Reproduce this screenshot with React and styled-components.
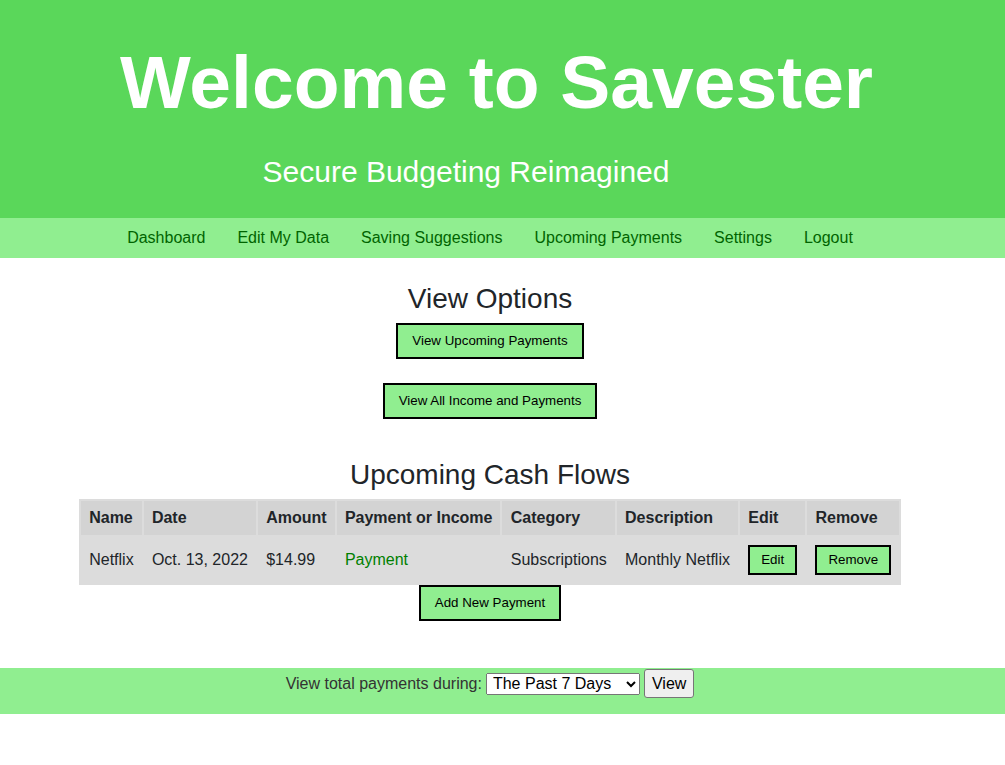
import React from "react";
import styled, { createGlobalStyle } from "styled-components";

const GlobalStyle = createGlobalStyle`
    body {
        margin: 0;
        font-family: "Liberation Sans", Arial, sans-serif;
        color: #212529;
        background: #fff;
    }
`;

const Header = styled.header`
    background: #5ad75a;
    padding: 39px 12px 29px 0;
    text-align: center;
    color: #fff;
`;

const Title = styled.h1`
    margin: 0;
    font-size: 75px;
    font-weight: bold;
`;

const Subtitle = styled.h2`
    margin: 30px 61px 0 0;
    font-size: 30px;
    font-weight: normal;
`;

const Nav = styled.nav`
    background: #90ee90;
    height: 40px;
    display: flex;
    justify-content: center;
    align-items: center;
    padding-right: 25px;
`;

const NavLink = styled.a`
    color: #006400;
    font-size: 16px;
    padding: 0 16px;
    text-decoration: none;
    cursor: pointer;
`;

const Main = styled.main`
    display: flex;
    flex-direction: column;
    align-items: center;
    padding-right: 25px;
`;

const Heading = styled.h2`
    font-size: 28px;
    font-weight: normal;
    margin: ${(p) => p.$top}px 0 8px;
`;

const GreenButton = styled.button`
    background: #90ee90;
    border: 2px solid #000;
    font-family: "Liberation Sans", Arial, sans-serif;
    font-size: 13.33px;
    line-height: 16px;
    color: #000;
    padding: ${(p) => (p.$small ? "5px 11px" : "8px 14px")};
    margin-top: ${(p) => p.$top || 0}px;
    cursor: pointer;
`;

const Table = styled.table`
    background: #dcdcdc;
    border-spacing: 2px;
    font-size: 16px;
`;

const Th = styled.th`
    background: #d3d3d3;
    text-align: left;
    padding: 8px 8px 8px 8.25px;
    font-weight: bold;
`;

const Td = styled.td`
    padding: 8px 8px 8px 8.25px;
    color: ${(p) => p.$color || "#212529"};
`;

const Footer = styled.footer`
    background: #90ee90;
    margin-top: 47px;
    padding: 1px 25px 16px 0;
    display: flex;
    justify-content: center;
    align-items: center;
    gap: 4px;
    font-size: 16px;
    color: #333;
`;

const Select = styled.select`
    font-family: "Liberation Sans", Arial, sans-serif;
    font-size: 16px;
    height: 22px;
    padding: 0 2px;
    color: #000;
`;

const PlainButton = styled.button`
    font-family: "Liberation Sans", Arial, sans-serif;
    font-size: 16px;
    line-height: 19px;
    color: #000;
    background: #efefef;
    border: 1px solid #767676;
    border-radius: 3px;
    padding: 4px 7px;
`;

const columns = ["Name", "Date", "Amount", "Payment or Income", "Category", "Description", "Edit", "Remove"];

const App = () => {
    return (
        <div>
            <GlobalStyle />
            <Header>
                <Title>Welcome to Savester</Title>
                <Subtitle>Secure Budgeting Reimagined</Subtitle>
            </Header>
            <Nav>
                <NavLink>Dashboard</NavLink>
                <NavLink>Edit My Data</NavLink>
                <NavLink>Saving Suggestions</NavLink>
                <NavLink>Upcoming Payments</NavLink>
                <NavLink>Settings</NavLink>
                <NavLink>Logout</NavLink>
            </Nav>
            <Main>
                <Heading $top={25}>View Options</Heading>
                <GreenButton>View Upcoming Payments</GreenButton>
                <GreenButton $top={24}>View All Income and Payments</GreenButton>
                <Heading $top={40}>Upcoming Cash Flows</Heading>
                <Table>
                    <thead>
                        <tr>
                            {columns.map((c) => <Th key={c}>{c}</Th>)}
                        </tr>
                    </thead>
                    <tbody>
                        <tr>
                            <Td>Netflix</Td>
                            <Td>Oct. 13, 2022</Td>
                            <Td>$14.99</Td>
                            <Td $color="#008000">Payment</Td>
                            <Td>Subscriptions</Td>
                            <Td>Monthly Netflix</Td>
                            <Td><GreenButton $small>Edit</GreenButton></Td>
                            <Td><GreenButton $small>Remove</GreenButton></Td>
                        </tr>
                    </tbody>
                </Table>
                <GreenButton>Add New Payment</GreenButton>
            </Main>
            <Footer>
                <span>View total payments during:</span>
                <Select defaultValue="7">
                    <option value="7">The Past 7 Days</option>
                    <option value="30">The Past 30 Days</option>
                    <option value="365">The Past Year</option>
                </Select>
                <PlainButton>View</PlainButton>
            </Footer>
        </div>
    );
};

export default App;
